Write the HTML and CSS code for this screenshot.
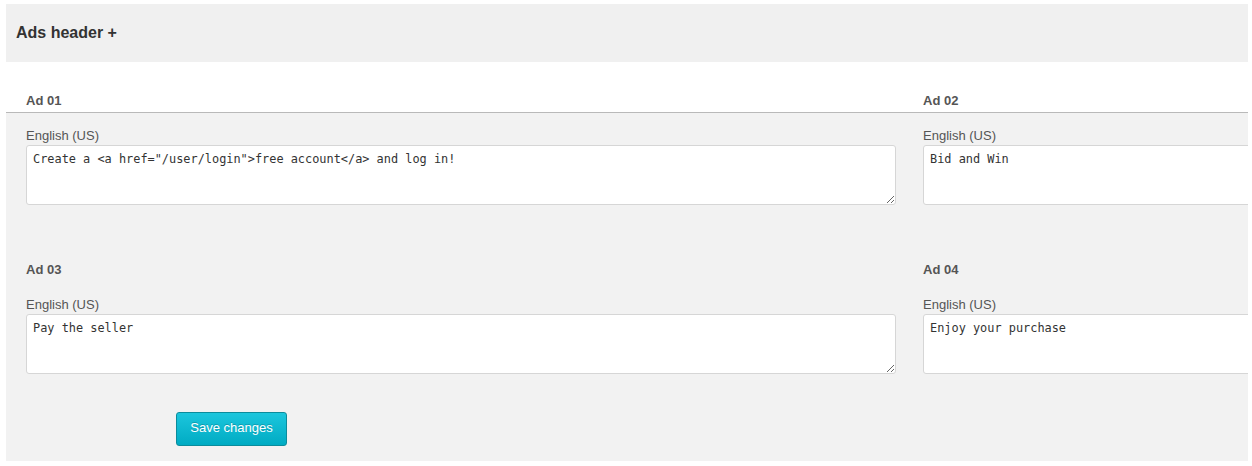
FILE: index.html
```html
<!DOCTYPE html>
<html lang="en">
<head>
  <meta charset="UTF-8" />
  <title>Ads</title>
  <link rel="stylesheet" href="styles.css">
</head>
<body>
  <div class="panel">
    <div class="panel-head">Ads header +</div>

    <div class="ad-titles">
      <div class="ad-title">Ad 01</div>
      <div class="ad-title">Ad 02</div>
    </div>

    <form class="panel-body">
      <div class="ad-row">
        <div class="ad-field">
          <label class="lang">English (US)</label>
          <textarea>Create a &lt;a href="/user/login"&gt;free account&lt;/a&gt; and log in!</textarea>
        </div>
        <div class="ad-field">
          <label class="lang">English (US)</label>
          <textarea>Bid and Win</textarea>
        </div>
      </div>

      <div class="ad-row second-titles">
        <div class="ad-title">Ad 03</div>
        <div class="ad-title">Ad 04</div>
      </div>

      <div class="ad-row">
        <div class="ad-field">
          <label class="lang">English (US)</label>
          <textarea>Pay the seller</textarea>
        </div>
        <div class="ad-field">
          <label class="lang">English (US)</label>
          <textarea>Enjoy your purchase</textarea>
        </div>
      </div>

      <div class="form-actions">
        <button type="button" class="btn-save">Save changes</button>
      </div>
    </form>
  </div>
</body>
</html>
```

FILE: styles.css
```css
* {
  box-sizing: border-box;
}

body {
  margin: 0;
  background: #fff;
  font-family: 'Liberation Sans', Arial, sans-serif;
  color: #333;
}

.panel {
  margin: 4px 4px 0 6px;
  overflow: hidden;
}

.panel-head {
  height: 58px;
  padding-left: 10px;
  display: flex;
  align-items: center;
  background: #f0f0f0;
  font-size: 16px;
  font-weight: bold;
  color: #333;
}

.ad-titles,
.ad-row {
  display: grid;
  grid-template-columns: 870px 870px;
  column-gap: 27px;
}

.ad-titles {
  padding: 31px 20px 3px;
  background: #fff;
  border-bottom: 1px solid #b9b9b9;
  box-shadow: 0 1px 0 #e2e2e2;
}

.ad-title {
  font-size: 13px;
  line-height: 16px;
  font-weight: bold;
  color: #555;
}

.panel-body {
  margin: 0;
  padding: 14px 20px 15px;
  background: #f2f2f2;
}

.second-titles {
  margin: 57px 0 18px;
}

.lang {
  display: block;
  font-size: 13px;
  line-height: 17px;
  margin-bottom: 1px;
  color: #555;
}

.ad-field textarea {
  display: block;
  width: 100%;
  height: 60px;
  margin: 0;
  padding: 6px;
  border: 1px solid #d6d6d6;
  border-radius: 3px;
  background: #fff;
  font-family: 'DejaVu Sans Mono', 'Liberation Mono', monospace;
  font-size: 11.9px;
  line-height: 14px;
  color: #333;
  resize: vertical;
}

.form-actions {
  margin-top: 38px;
  padding-left: 150px;
}

.btn-save {
  height: 34px;
  width: 111px;
  padding: 0 0 3px;
  border: 1px solid #0b8c9c;
  border-radius: 3px;
  background: linear-gradient(#1cc6dd, #00abc3);
  color: #fff;
  font-family: 'Liberation Sans', Arial, sans-serif;
  font-size: 13px;
  text-shadow: 0 -1px 0 rgba(0, 0, 0, 0.2);
  cursor: pointer;
}
```
